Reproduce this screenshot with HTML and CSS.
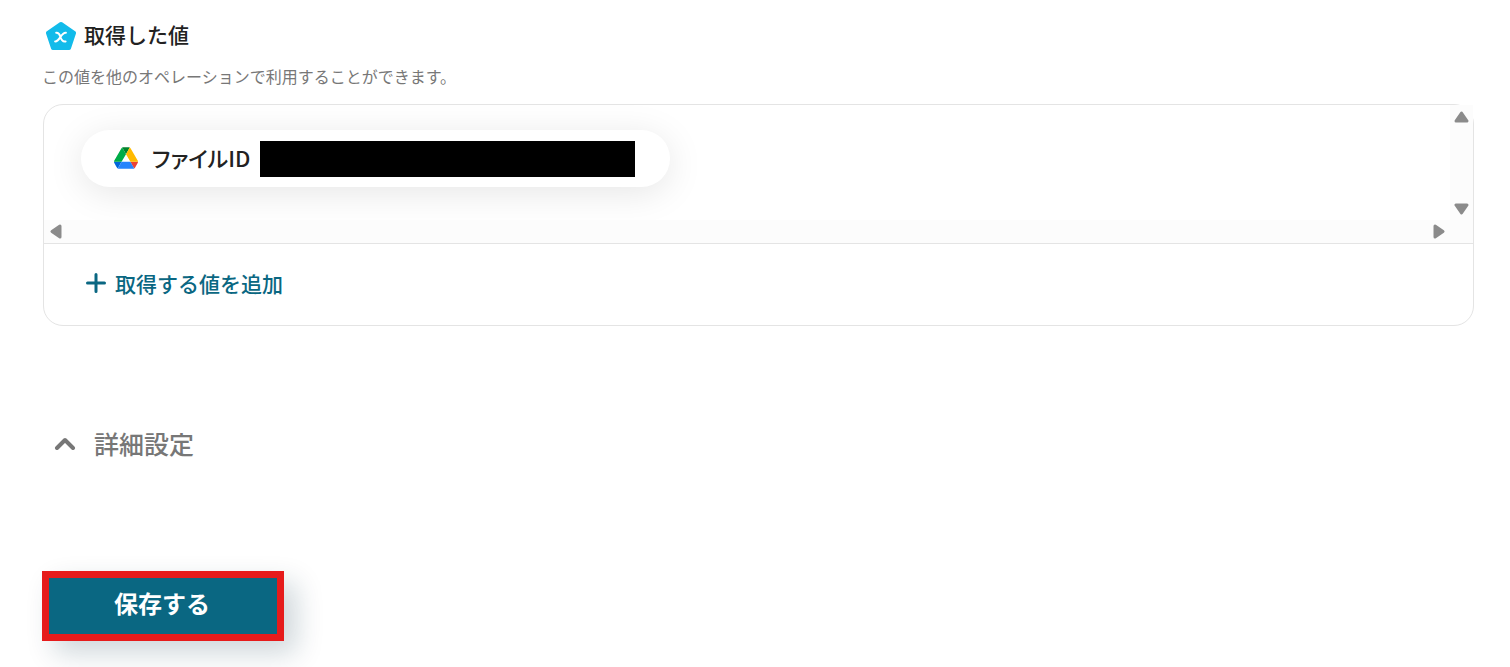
FILE: index.html
```html
<!DOCTYPE html>
<html lang="ja">
<head>
<meta charset="utf-8">
<title>取得した値</title>
<link rel="stylesheet" href="styles.css">
</head>
<body>
<main class="page">
  <header class="heading">
    <svg class="heading-icon" width="30" height="29" viewBox="0 0 30 29" aria-hidden="true">
      <path d="M15 3 28 12 23 27H7L2 12Z" fill="#12bbea" stroke="#12bbea" stroke-width="4" stroke-linejoin="round"/>
      <path d="M10.200 11.700c2.300-.2 3.200.6 4.100 3.800s2 5.700 5.300 5M19.900 11.700c-2.200-.2-3.500 1.200-5.400 4.200s-3 4.700-5.400 4.500" fill="none" stroke="#fff" stroke-width="2" stroke-linecap="round"/>
    </svg>
    <h2 class="title">取得した値</h2>
  </header>
  <p class="description">この値を他のオペレーションで利用することができます。</p>
  <section class="panel">
    <div class="viewport">
      <div class="content">
        <div class="chip">
          <svg width="24" height="22" viewBox="0 0 87.300 78" aria-hidden="true">
            <path fill="#0066da" d="m6.600 66.850 3.850 6.650c.8 1.400 1.950 2.500 3.300 3.300L27.500 53H0c0 1.550.4 3.100 1.200 4.500z"/>
            <path fill="#00ac47" d="M43.650 25 29.900 1.200c-1.350.8-2.500 1.900-3.300 3.300L1.200 48.500A9 9 0 0 0 0 53h27.500z"/>
            <path fill="#ea4335" d="M73.550 76.800c1.350-.8 2.500-1.900 3.300-3.300l1.600-2.750 7.650-13.250c.8-1.400 1.200-2.950 1.200-4.500H59.800l5.850 11.500z"/>
            <path fill="#00832d" d="M43.650 25 57.400 1.200C56.050.4 54.500 0 52.900 0H34.400c-1.600 0-3.150.45-4.500 1.200z"/>
            <path fill="#2684fc" d="M59.800 53H27.500L13.750 76.800c1.350.8 2.900 1.200 4.500 1.200h50.800c1.600 0 3.150-.45 4.500-1.200z"/>
            <path fill="#ffba00" d="M73.400 26.500 60.700 4.500c-.8-1.400-1.950-2.500-3.300-3.300L43.650 25 59.800 53h27.450c0-1.550-.4-3.100-1.200-4.500z"/>
          </svg>
          <span class="chip-label">ファイルID</span>
          <span class="redacted"></span>
        </div>
      </div>
      <div class="bar bar-vertical">
        <button class="arrow" type="button" aria-label="上へスクロール"><svg width="15" height="12" viewBox="0 0 15 12"><path d="M7.500 2 13 10H2Z"/></svg></button>
        <button class="arrow" type="button" aria-label="下へスクロール"><svg width="15" height="12" viewBox="0 0 15 12"><path d="M2 2h11L7.500 10Z"/></svg></button>
      </div>
      <div class="bar bar-horizontal">
        <button class="arrow" type="button" aria-label="左へスクロール"><svg width="12" height="15" viewBox="0 0 12 15"><path d="M10 2v11L2 7.500Z"/></svg></button>
        <button class="arrow" type="button" aria-label="右へスクロール"><svg width="12" height="15" viewBox="0 0 12 15"><path d="M2 2v11L10 7.500Z"/></svg></button>
      </div>
    </div>
    <button class="add" type="button">
      <svg width="20" height="20" viewBox="0 0 20 20" aria-hidden="true"><path d="M10 1.500v17M1.500 10h17" fill="none" stroke="#0a6782" stroke-width="3" stroke-linecap="round"/></svg>
      <span>取得する値を追加</span>
    </button>
  </section>
  <button class="details" type="button" aria-expanded="false">
    <svg width="22" height="14" viewBox="0 0 22 14" aria-hidden="true"><path d="M3 12 11 4l8 8" fill="none" stroke="#777" stroke-width="4" stroke-linecap="round" stroke-linejoin="round"/></svg>
    <span>詳細設定</span>
  </button>
  <button class="save" type="button">保存する</button>
</main>
</body>
</html>
```
FILE: styles.css
```css
* {
  box-sizing: border-box;
}

body {
  margin: 0;
  background: #fff;
  color: #222;
  font-family: "Noto Sans CJK JP", sans-serif;
}

button {
  padding: 0;
  border: 0;
  background: none;
  font-family: inherit;
  cursor: pointer;
}

.page {
  display: flex;
  flex-direction: column;
  align-items: flex-start;
  padding: 18px 36px 26px 42px;
}

.heading {
  display: flex;
  align-items: flex-end;
  gap: 8px;
  padding-left: 4px;
}

.title {
  margin: 0;
  font-size: 21px;
  font-weight: 500;
  line-height: 32px;
}

.description {
  margin: 14px 0 16px;
  color: #777;
  font-size: 16px;
  line-height: 24px;
}

.panel {
  align-self: stretch;
  margin-left: 1px;
  border: 1px solid #e4e4e4;
  border-radius: 20px;
}

.viewport {
  display: grid;
  grid-template-columns: 1fr 23px;
  border-bottom: 1px solid #e4e4e4;
}

.content {
  padding: 25px 37px 33px;
  overflow: hidden;
  border-top-left-radius: 20px;
}

.chip {
  display: flex;
  align-items: flex-start;
  width: fit-content;
  padding: 11px 35px 10px 33px;
  border-radius: 29px;
  background: #fff;
  box-shadow: 0 6px 36px rgba(0, 0, 0, 0.1);
}

.chip svg {
  margin-top: 6px;
}

.chip-label {
  margin: 0 10px 0 14px;
  font-size: 22px;
  font-weight: 500;
  line-height: 32px;
  font-feature-settings: "palt";
}

.redacted {
  width: 375px;
  height: 36px;
  background: #000;
}

.bar {
  display: flex;
  align-items: center;
  justify-content: space-between;
  background: #fcfcfc;
}

.bar-vertical {
  flex-direction: column;
  padding: 6px 0 5px;
}

.bar-horizontal {
  grid-column: 1 / -1;
  height: 23px;
  padding: 0 28px 0 6px;
}

.arrow {
  display: flex;
  fill: #8b8b8b;
  stroke: #8b8b8b;
  stroke-width: 3;
  stroke-linejoin: round;
}

.add {
  display: flex;
  align-items: center;
  gap: 9px;
  margin: 23px 42px 26px;
  color: #0a6782;
  font-size: 21px;
  font-weight: 500;
  line-height: 32px;
}

.details {
  display: flex;
  align-items: center;
  gap: 18px;
  margin: 99px 0 0 12px;
  color: #777;
  font-size: 25px;
  font-weight: 500;
  line-height: 36px;
}

.save {
  width: 242px;
  height: 70px;
  margin-top: 110px;
  padding: 0 2px 6px 0;
  border: 7px solid #e61b1b;
  background: #0a6782;
  box-shadow: 12px 12px 28px rgba(10, 50, 70, 0.2);
  color: #fff;
  font-size: 24px;
  font-weight: 700;
  line-height: 36px;
}
```
